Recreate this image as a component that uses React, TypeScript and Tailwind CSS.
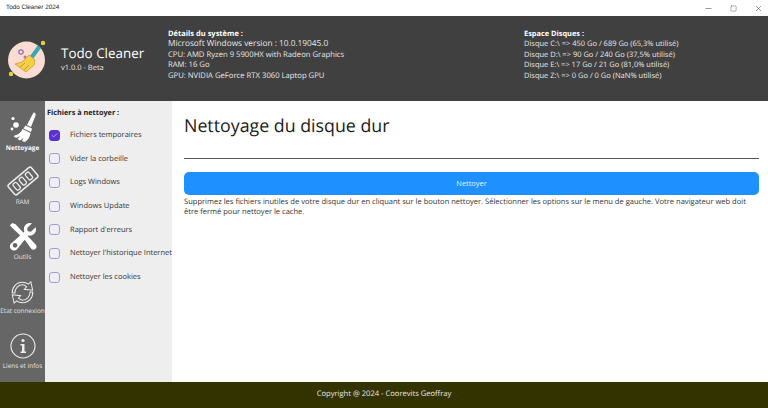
import { Minus, Square, X, Check } from "lucide-react";

const options = [
  { label: "Fichiers temporaires", checked: true },
  { label: "Vider la corbeille", checked: false },
  { label: "Logs Windows", checked: false },
  { label: "Windows Update", checked: false },
  { label: "Rapport d'erreurs", checked: false },
  { label: "Nettoyer l'historique Internet", checked: false },
  { label: "Nettoyer les cookies", checked: false },
];

const disks = [
  "Disque C:\\ => 450 Go / 689 Go (65,3% utilisé)",
  "Disque D:\\ => 90 Go / 240 Go (37,5% utilisé)",
  "Disque E:\\ => 17 Go / 21 Go (81,0% utilisé)",
  "Disque Z:\\ => 0 Go / 0 Go (NaN% utilisé)",
];

function Logo() {
  return (
    <svg width="46" height="46" viewBox="0 0 46 46" className="shrink-0">
      <circle cx="21.5" cy="24" r="18.5" fill="#fbdcd2" />
      <circle cx="38" cy="7" r="2.2" fill="#e6d23c" />
      <circle cx="6" cy="38" r="2.2" fill="#e6d23c" />
      <circle cx="16" cy="16" r="2.2" fill="none" stroke="#8a6fb0" strokeWidth="1.2" />
      <circle cx="20" cy="21" r="1.5" fill="#c0708a" />
      <path d="M33 9 L36 12 L28 23 L25 20 Z" fill="#3aa6b0" />
      <path d="M24 19 L30 24 L29 29 L21 36 L10 28 L17 26 Z" fill="#f3cf4a" stroke="#c9a02c" strokeWidth="0.8" />
      <path d="M15 31 L20 27 M19 34 L24 29" stroke="#c9a02c" strokeWidth="1" />
    </svg>
  );
}

function BroomIcon() {
  return (
    <svg width="30" height="31" viewBox="0 0 30 31" fill="white">
      <path d="M25.5 0.5 C27 0.5 28 1.5 27.7 3 L23 15 L19 13 Z" />
      <path d="M17.5 13.5 L24 16.5 L23 20 L15.5 16.5 Z" />
      <path d="M14.5 17 L22.5 21 C22 25 20 28 17 30 L14 29 L15.5 26 L12 28.5 L9.5 27 L12 24 L8 26 L5.5 24 C9 23 13 21 14.5 17 Z" />
      <circle cx="8" cy="13" r="2.8" />
      <circle cx="5" cy="6.5" r="1.6" />
      <circle cx="4" cy="17" r="1.4" />
    </svg>
  );
}

function RamIcon() {
  return (
    <svg width="32" height="32" viewBox="0 0 32 32" fill="none" stroke="#ededed">
      <g transform="rotate(-40 16 16)">
        <rect x="1" y="9.5" width="30" height="13" rx="2" strokeWidth="1.5" />
        <rect x="5.5" y="12" width="4.5" height="8" rx="1.5" strokeWidth="1.3" />
        <rect x="13.5" y="12" width="4.5" height="8" rx="1.5" strokeWidth="1.3" />
        <rect x="21.5" y="12" width="4.5" height="8" rx="1.5" strokeWidth="1.3" />
      </g>
    </svg>
  );
}

function ToolsIcon() {
  return (
    <svg width="28" height="29" viewBox="0 0 30 30" fill="white">
      <path d="M1 3 L3.5 0.5 L7 2 L17.5 13 L14.5 16 L3.5 6 Z" />
      <path d="M28.5 5 L23.5 10 L20 9.5 L19.5 6 L24.5 1 C20 -0.5 15.5 3 16 8 L16.5 10 L3.5 21.5 A4.5 4.5 0 1 0 9.5 27.5 L20.5 14 C25.5 15 30.5 10.5 28.5 5 Z M6.5 27 A2.5 2.5 0 1 1 6.5 22 A2.5 2.5 0 0 1 6.5 27 Z" fillRule="evenodd" />
      <path d="M16.5 18 L20 14.5 L28.5 23.5 C30 25 29.8 27 28.5 28.2 C27 29.7 25 29.5 23.8 28 Z" />
    </svg>
  );
}

function SyncIcon() {
  return (
    <svg width="27" height="25" viewBox="0 0 27 27" fill="none" stroke="#ededed" strokeWidth="1.1">
      <path d="M2.5 14 C2 8 6.5 2.5 13.5 2.5 C16 2.5 18 3.2 19.8 4.5 L22.5 2 L24.5 11 L15.5 10 L18 7.3 C16.6 6 15 5.2 13.5 5.2 C9 5.2 5.3 9 5.3 14 Z" />
      <path d="M24.5 13 C25 19 20.5 24.5 13.5 24.5 C11 24.5 9 23.8 7.2 22.5 L4.5 25 L2.5 16 L11.5 17 L9 19.7 C10.4 21 12 21.8 13.5 21.8 C18 21.8 21.7 18 21.7 13 Z" />
    </svg>
  );
}

function InfoIcon() {
  return (
    <svg width="26" height="26" viewBox="0 0 26 26" fill="#ededed">
      <circle cx="13" cy="13" r="12" fill="none" stroke="#ededed" strokeWidth="1.1" />
      <circle cx="13" cy="7.5" r="1.6" />
      <path d="M10.5 11 H14.5 V18.5 H16 V20 H10.5 V18.5 H12 V12.5 H10.5 Z" />
    </svg>
  );
}

function NavItem({
  label,
  active,
  icon,
  iconBox,
}: {
  label: string;
  active?: boolean;
  icon: React.ReactNode;
  iconBox: string;
}) {
  return (
    <div className="flex w-[45px] flex-col items-center">
      <div className={`flex items-center justify-center ${iconBox}`}>{icon}</div>
      <span
        className={`whitespace-nowrap text-[6.4px] leading-[10px] ${
          active ? "font-bold text-white" : "text-[#e4e4e4]"
        }`}
      >
        {label}
      </span>
    </div>
  );
}

export default function App() {
  return (
    <div className="flex h-[408px] w-[768px] flex-col overflow-hidden bg-white font-['Open_Sans',sans-serif] text-[#222] [text-rendering:geometricPrecision]">
      {/* barre de titre */}
      <div className="flex h-4 shrink-0 items-center justify-between bg-white pl-[6px] font-['Liberation_Sans',sans-serif] text-[6.3px] text-[#222]">
        <span>Todo Cleaner 2024</span>
        <div className="flex items-center gap-[5px] text-[#222]">
          <div className="flex w-5 justify-center"><Minus size={9} strokeWidth={1.2} /></div>
          <div className="flex w-5 justify-center"><Square size={7} strokeWidth={1.2} /></div>
          <div className="flex w-5 justify-center"><X size={9} strokeWidth={1.2} /></div>
        </div>
      </div>

      {/* en-tete */}
      <div className="flex h-[85px] shrink-0 items-center bg-[#404040] pb-[7px] text-[#e8e8e8]">
        <div className="flex w-[168px] shrink-0 items-center pl-[5px] pt-[7px]">
          <Logo />
          <div className="ml-[10px]">
            <div className="text-[13.4px] leading-[19px] font-medium text-white">Todo Cleaner</div>
            <div className="text-[7.5px] leading-[11px]">v1.0.0 - Beta</div>
          </div>
        </div>
        <div className="w-[356px] shrink-0 text-[7.7px] leading-[10.4px]">
          <div className="text-[7.5px] font-bold text-white">Détails du système :</div>
          <div className="text-[8.3px]">Microsoft Windows version : 10.0.19045.0</div>
          <div>CPU: AMD Ryzen 9 5900HX with Radeon Graphics</div>
          <div>RAM: 16 Go</div>
          <div>GPU: NVIDIA GeForce RTX 3060 Laptop GPU</div>
        </div>
        <div className="text-[7.5px] leading-[10.4px]">
          <div className="text-[7.4px] font-bold text-white">Espace Disques :</div>
          {disks.map((d) => (
            <div key={d}>{d}</div>
          ))}
        </div>
      </div>

      <div className="flex min-h-0 flex-1">
        {/* navigation */}
        <div className="flex w-[45px] shrink-0 flex-col items-center bg-[#666666] pt-[11px]">
          <NavItem label="Nettoyage" active icon={<BroomIcon />} iconBox="h-[31px]" />
          <div className="h-[12px] shrink-0" />
          <NavItem label="RAM" icon={<RamIcon />} iconBox="h-[32px]" />
          <div className="h-[13px] shrink-0" />
          <NavItem label="Outils" icon={<ToolsIcon />} iconBox="h-[32px]" />
          <div className="h-[17px] shrink-0" />
          <NavItem label="Etat connexion" icon={<SyncIcon />} iconBox="h-[27px]" />
          <div className="h-[15px] shrink-0" />
          <NavItem label="Liens et Infos" icon={<InfoIcon />} iconBox="h-[30px]" />
        </div>

        {/* options */}
        <div className="w-[127px] shrink-0 bg-[#eeeeee] pl-[2px] pt-[7px]">
          <div className="text-[7.3px] leading-[11px] font-bold text-[#222]">Fichiers à nettoyer :</div>
          <div className="mt-[10.5px] flex flex-col gap-[12.7px] pl-[2px]">
            {options.map((o) => (
              <div key={o.label} className="flex h-[11px] items-center whitespace-nowrap">
                <div
                  className={`flex h-[11px] w-[11px] shrink-0 items-center justify-center rounded-[3px] border ${
                    o.checked ? "border-[#5b2fd0] bg-[#5b2fd0]" : "border-[#a79ad0] bg-[#efeef6]"
                  }`}
                >
                  {o.checked && <Check size={7} strokeWidth={2} color="white" />}
                </div>
                <span className="ml-[10px] pt-px text-[7.5px] leading-[11px] text-[#333]">{o.label}</span>
              </div>
            ))}
          </div>
        </div>

        {/* contenu */}
        <div className="min-w-0 flex-1 pl-[12px] pr-[9px] pt-[13px]">
          <h1 className="text-[17.8px] leading-[24px] font-medium text-[#1c1c1c]">Nettoyage du disque dur</h1>
          <div className="mt-[20px] h-px bg-[#555]" />
          <button className="mt-[13px] block h-[23px] w-full rounded-[5px] bg-[#1e90ff] pt-px text-[7.4px] text-[#e6f2ff]">
            Nettoyer
          </button>
          <p className="mt-[2px] text-[7.55px] leading-[10px] text-[#333]">
            Supprimez les fichiers inutiles de votre disque dur en cliquant sur le bouton nettoyer. Sélectionner les options sur le menu de gauche. Votre navigateur web doit être fermé pour nettoyer le cache.
          </p>
        </div>
      </div>

      {/* pied de page */}
      <div className="flex h-[26px] shrink-0 items-center justify-center bg-[#333300] text-[7.6px] text-[#e8e8e8]">
        Copyright @ 2024 - Coorevits Geoffray
      </div>
    </div>
  );
}
